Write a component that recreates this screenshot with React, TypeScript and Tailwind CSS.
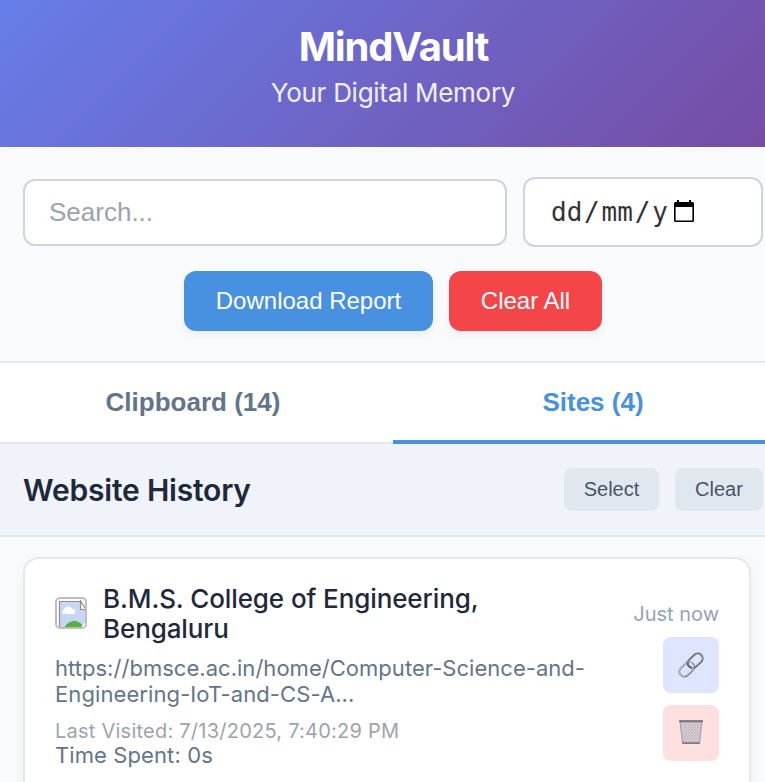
import type { ReactNode } from "react";

const ARIAL = "font-['Liberation_Sans',Arial,sans-serif]";

function CalendarIcon() {
  return (
    <svg width="20" height="22" viewBox="0 0 20 22" className="shrink-0">
      <path
        fillRule="evenodd"
        d="M3 0h2v2h10V0h2v2h1.500a1.500 1.500 0 0 1 1.500 1.500V20.500a1.500 1.500 0 0 1-1.500 1.500h-17A1.500 1.500 0 0 1 0 20.500V3.500A1.500 1.500 0 0 1 1.500 2H3zM1.600 7v13.400h16.800V7z"
        fill="#000"
      />
    </svg>
  );
}

function BrokenImageIcon() {
  return (
    <svg width="32" height="32" viewBox="0 0 32 32" className="shrink-0">
      <defs>
        <linearGradient id="sky" x1="0" y1="0" x2="0" y2="1">
          <stop offset="0" stopColor="#c9d9f5" />
          <stop offset="1" stopColor="#c3d3f2" />
        </linearGradient>
        <clipPath id="frame">
          <rect x="1" y="1" width="30" height="30" rx="4" />
        </clipPath>
      </defs>
      <rect x="0" y="0" width="32" height="32" rx="5" fill="#fff" />
      <g clipPath="url(#frame)">
        <path d="M4.500 32V4.500H25l6 7.500V32z" fill="url(#sky)" />
        <path d="M8.500 17a2.600 2.600 0 0 1 .4-4.600 4.800 4.800 0 0 1 8.600-.4 2.700 2.700 0 0 1 1.500 5z" fill="#fff" />
        <path d="M9 31c5-9 14-9 19-2l2 3H8z" fill="#57ae43" />
        <path d="M31 25l-6 6h6z" fill="#fff" />
        <path d="M4.500 32V4.500H25" fill="none" stroke="#8e8e8e" strokeWidth="1.200" />
        <path d="M25.500 4v8.500H31z" fill="#fff" stroke="#8e8e8e" strokeWidth="1.200" />
      </g>
      <rect x="1" y="1" width="30" height="30" rx="4" fill="none" stroke="#bdbdbd" strokeWidth="2" />
    </svg>
  );
}

function LinkIcon() {
  return (
    <svg width="26" height="26" viewBox="0 0 26 26">
      <g fill="none">
        <g transform="rotate(-43 17.300 8.700)">
          <rect x="9" y="3.900" width="16.600" height="9.600" rx="4.800" stroke="#5a5250" strokeWidth="1.900" />
          <rect x="9.100" y="4.200" width="16.200" height="9.100" rx="4.550" stroke="#a9b9c0" strokeWidth="0.800" />
        </g>
        <g transform="rotate(-43 8.700 17.300)">
          <rect x="0.400" y="12.500" width="16.600" height="9.600" rx="4.800" stroke="#66696b" strokeWidth="1.900" />
          <rect x="0.500" y="12.400" width="16.200" height="9.100" rx="4.550" stroke="#c3d5db" strokeWidth="1.100" />
        </g>
        <path d="M9.700 9.200c-.5 3 1.200 5.900 4.300 6.900" stroke="#4b4444" strokeWidth="1.800" />
        <path d="M9.800 9.200c-.5 3 1.200 5.900 4.300 6.900" stroke="#a9b9c0" strokeWidth="0.700" />
      </g>
    </svg>
  );
}

function TrashIcon() {
  return (
    <svg width="26" height="26" viewBox="0 0 26 26">
      <defs>
        <pattern id="mesh" width="2.800" height="2.800" patternUnits="userSpaceOnUse">
          <path d="M0 0l2.800 2.800M2.800 0L0 2.800" stroke="#a09ba4" strokeWidth="0.600" />
        </pattern>
      </defs>
      <path d="M2 2.500h22l-2.500 22h-17z" fill="#e9dce0" />
      <path d="M2 2.500h22l-2.500 22h-17z" fill="url(#mesh)" stroke="#95949c" strokeWidth="0.900" />
      <path d="M1 1.300h24l-.4 2H1.400z" fill="#62666e" />
      <path d="M3.500 2.300h19" stroke="#8f949b" strokeWidth="0.600" />
      <path d="M4.400 24h17.200" stroke="#70747e" strokeWidth="1.500" />
    </svg>
  );
}

function Tab({ active, children }: { active?: boolean; children: ReactNode }) {
  return (
    <button
      className={`${ARIAL} flex-1 border-b-4 pt-px text-[26px] leading-8 font-bold ${
        active ? "border-[#4890e0] text-[#4890e0]" : "border-transparent text-[#64748b]"
      }`}
    >
      {children}
    </button>
  );
}

export default function App() {
  return (
    <div className="h-[782px] w-full overflow-hidden bg-[#f9fafc] font-['Inter',sans-serif]">
      <div className="-ml-[7px] w-[800px]">
        <header className="flex h-[147px] flex-col items-center bg-[linear-gradient(135deg,#667eea_0%,#764ba2_100%)] pt-[23px] text-white">
          <h1 className="pl-px text-[40px] leading-[48px] font-bold tracking-[-1.16px]">MindVault</h1>
          <p className="mt-[6px] text-[26px] leading-8 tracking-[-0.28px] text-white/90">Your Digital Memory</p>
        </header>

        <section className="h-[216px] border-b-2 border-[#e2e8f0] px-[30px] pt-[30px]">
          <div className="flex items-center gap-4">
            <div
              className={`${ARIAL} flex h-[67px] w-[484px] items-center rounded-xl border-2 border-[#d1d3dd] bg-white px-6 text-[26px] leading-8 text-[#9ca3af]`}
            >
              Search...
            </div>
            <div className="flex h-[70px] w-[240px] items-center rounded-xl border-2 border-[#d1d3dd] bg-white pl-[26px]">
              <div className="flex w-[118px] gap-[1.8px] overflow-hidden font-['DejaVu_Sans_Mono',monospace] text-[26px] leading-8 text-[#333]">
                <span>dd</span>
                <span>/</span>
                <span>mm</span>
                <span>/</span>
                <span>y</span>
              </div>
              <div className="ml-[5px] pb-[2px]">
                <CalendarIcon />
              </div>
            </div>
          </div>
          <div className={`${ARIAL} mt-6 flex justify-center gap-4 text-[24px] leading-7 text-white`}>
            <button className="h-[60px] w-[249px] rounded-xl bg-[#4890e0] shadow-[0_4px_8px_rgba(0,0,0,0.05)]">
              Download Report
            </button>
            <button className="h-[60px] w-[153px] rounded-xl bg-[#f44648] shadow-[0_4px_8px_rgba(0,0,0,0.05)]">
              Clear All
            </button>
          </div>
        </section>

        <nav className="h-[81px] border-b-2 border-[#e2e8f0] bg-white">
          <div className="flex h-[81px]">
            <Tab>Clipboard (14)</Tab>
            <Tab active>Sites (4)</Tab>
          </div>
        </nav>

        <section className="flex h-[93px] items-center border-b-2 border-[#e2e8f0] bg-[#f0f3f9] px-[30px]">
          <h2 className="flex-1 text-[30px] leading-9 font-semibold tracking-[-0.2px] text-[#1e293b]">
            Website History
          </h2>
          <div className={`${ARIAL} flex gap-4 text-[20px] leading-6 text-[#475569]`}>
            <button className="h-[43px] w-[95px] rounded-lg bg-[#e1e7ef] pb-px">Select</button>
            <button className="h-[43px] w-[88px] rounded-lg bg-[#e1e7ef] pb-px">Clear</button>
          </div>
        </section>

        <main className="pt-5 pl-[30px]">
          <article className="flex h-[260px] w-[728px] justify-between rounded-2xl border-2 border-[#e2e8f0] bg-white px-[30px] pt-[25px] shadow-[0_4px_12px_rgba(0,0,0,0.05)]">
            <div className="w-[540px]">
              <div className="flex items-center gap-4">
                <div className="pb-[2px]">
                  <BrokenImageIcon />
                </div>
                <h3 className="text-[26px] leading-[30px] font-medium tracking-[-0.1px] text-[#1e293b]">
                  B.M.S. College of Engineering,
                  <br />
                  Bengaluru
                </h3>
              </div>
              <p className="mt-[11px] text-[22px] leading-[26px] tracking-[0.03px] text-[#64748b]">
                https://bmsce.ac.in/home/Computer-Science-and-
                <br />
                <span className="tracking-[0.09px]">Engineering-IoT-and-CS-A...</span>
              </p>
              <p className="mt-3 text-[20px] leading-6 tracking-[0.24px] text-[#9ca3af]">
                Last Visited: 7/13/2025, 7:40:29 PM
              </p>
              <p className="-mt-px text-[22px] leading-[26px] tracking-[0.1px] text-[#64748b]">Time Spent: 0s</p>
            </div>
            <div className="flex shrink-0 flex-col items-end pt-[18px]">
              <span className="text-[20px] leading-6 text-[#94a3b8]">Just now</span>
              <button className="mt-[11px] flex size-14 items-center justify-center rounded-lg bg-[#e0e5ff]">
                <LinkIcon />
              </button>
              <button className="mt-3 flex size-14 items-center justify-center rounded-lg bg-[#ffe0e0] pb-[2px]">
                <TrashIcon />
              </button>
            </div>
          </article>
        </main>
      </div>
    </div>
  );
}
